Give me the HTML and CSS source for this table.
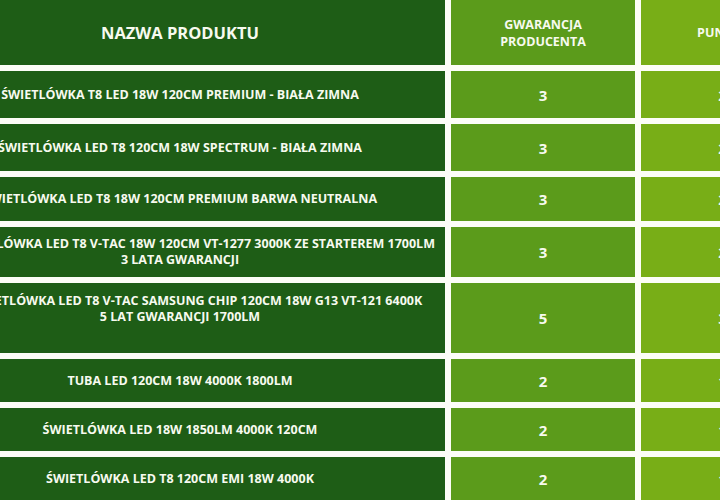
FILE: index.html
```html
<!DOCTYPE html>
<html lang="pl">
<head>
<meta charset="utf-8">
<title>Porównanie świetlówek</title>
<link rel="stylesheet" href="styles.css">
</head>
<body>
<div class="table">
  <div class="cell c1 head-main">NAZWA PRODUKTU</div>
  <div class="cell c2 head-sub">GWARANCJA<br>PRODUCENTA</div>
  <div class="cell c3 head-sub">PUNKTY</div>

  <div class="cell c1 name">ŚWIETLÓWKA T8 LED 18W 120CM PREMIUM - BIAŁA ZIMNA</div>
  <div class="cell c2 val">3</div>
  <div class="cell c3 val">2</div>

  <div class="cell c1 name">ŚWIETLÓWKA LED T8 120CM 18W SPECTRUM - BIAŁA ZIMNA</div>
  <div class="cell c2 val">3</div>
  <div class="cell c3 val">2</div>

  <div class="cell c1 name">ŚWIETLÓWKA LED T8 18W 120CM PREMIUM BARWA NEUTRALNA</div>
  <div class="cell c2 val">3</div>
  <div class="cell c3 val">2</div>

  <div class="cell c1 name">
    <div class="lines">
      <span class="line wide">ŚWIETLÓWKA LED T8 V-TAC 18W 120CM VT-1277 3000K ZE STARTEREM 1700LM</span>
      <span class="line">3 LATA GWARANCJI</span>
    </div>
  </div>
  <div class="cell c2 val">3</div>
  <div class="cell c3 val">2</div>

  <div class="cell c1 name top">
    <div class="lines">
      <span class="line wide">ŚWIETLÓWKA LED T8 V-TAC SAMSUNG CHIP 120CM 18W G13 VT-121 6400K</span>
      <span class="line">5 LAT GWARANCJI 1700LM</span>
    </div>
  </div>
  <div class="cell c2 val">5</div>
  <div class="cell c3 val">3</div>

  <div class="cell c1 name">TUBA LED 120CM 18W 4000K 1800LM</div>
  <div class="cell c2 val">2</div>
  <div class="cell c3 val">1</div>

  <div class="cell c1 name">ŚWIETLÓWKA LED 18W 1850LM 4000K 120CM</div>
  <div class="cell c2 val">2</div>
  <div class="cell c3 val">1</div>

  <div class="cell c1 name">ŚWIETLÓWKA LED T8 120CM EMI 18W 4000K</div>
  <div class="cell c2 val">2</div>
  <div class="cell c3 val">1</div>
</div>
</body>
</html>
```

FILE: styles.css
```css
html, body {
  margin: 0;
  padding: 0;
  overflow: hidden;
  background: #fcfdf7;
}

body {
  width: 720px;
  height: 500px;
  font-family: "Open Sans", "Noto Sans", "DejaVu Sans", sans-serif;
  font-weight: 700;
  color: #f7faef;
}

.table {
  display: grid;
  grid-template-columns: 530px 184px 163px;
  grid-template-rows: 65px 47px 47px 44px 50px 70px 43px 43px 43px;
  gap: 6px;
  margin-left: -85px;
  width: 889px;
}

.cell {
  display: flex;
  align-items: center;
  justify-content: center;
  text-align: center;
  white-space: nowrap;
}

.c1 { background: #1e5d16; }
.c2 { background: #5b9b1b; }
.c3 { background: #78ae17; }

.head-main {
  font-size: 16.5px;
  line-height: 20px;
}

.head-sub {
  font-size: 12.5px;
  line-height: 16.5px;
  padding-top: 2px;
}

.name {
  font-size: 12.5px;
  line-height: 16px;
}

.name.top {
  align-items: flex-start;
  padding-top: 10px;
}

.lines {
  display: flex;
  flex-direction: column;
  align-items: center;
}

.line {
  display: block;
}

.line.wide {
  padding-left: 34px;
}

.val {
  font-size: 15px;
  line-height: 20px;
}
```
